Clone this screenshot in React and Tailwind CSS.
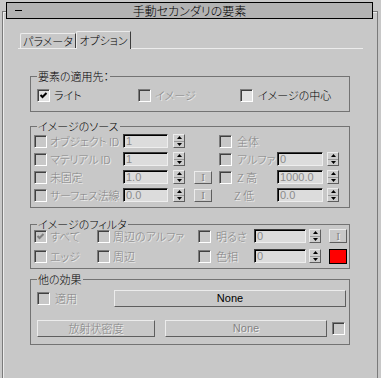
import React from 'react';

const jp = "font-['Noto_Sans_CJK_JP',sans-serif] font-light [font-feature-settings:'palt']";
const dim = 'text-[#838383] [text-shadow:1px_1px_0_#f2f2f2]';
const raised = 'border border-t-[#ececec] border-l-[#ececec] border-r-[#5e5e5e] border-b-[#5e5e5e]';

const Check = ({ checked, disabled }) => (
    <span
        className={`flex w-[13px] h-[13px] shrink-0 items-center justify-center border border-t-[#7c7c7c] border-l-[#7c7c7c] border-r-white border-b-white shadow-[inset_1px_1px_0_#404040] ${
            disabled ? 'bg-[#c8c8c8]' : 'bg-[#e2e2e2]'
        }`}
    >
        {checked && (
            <svg width="9" height="9" viewBox="0 0 9 9">
                <path d="M1.5 4 L3.5 6 L7.5 2" fill="none" stroke={disabled ? '#808080' : '#000'} strokeWidth="2" />
            </svg>
        )}
    </span>
);

const Label = ({ disabled, children, className = '' }) => (
    <span className={`whitespace-nowrap leading-none ${disabled ? dim : 'text-black'} ${className}`}>{children}</span>
);

const Field = ({ value, w }) => (
    <span
        className={`flex items-center h-[14px] ${w} shrink-0 border border-t-[#3a3a3a] border-l-[#3a3a3a] border-r-[#eeeeee] border-b-[#eeeeee] shadow-[inset_1px_1px_0_#000] bg-[#dcdcdc] pl-[2px] text-[#8c8c8c] text-[11px] leading-none font-normal font-['Liberation_Sans',sans-serif]`}
    >
        {value}
    </span>
);

const Spin = ({ className = '' }) => (
    <span className={`flex flex-col w-[12px] h-[14px] shrink-0 bg-[#cdcdcd] ${raised} ${className}`}>
        <span className="flex flex-1 items-center justify-center border-b border-[#9a9a9a]">
            <svg width="5" height="3" viewBox="0 0 5 3">
                <path d="M2.5 0 L5 3 L0 3Z" fill="#000" />
            </svg>
        </span>
        <span className="flex flex-1 items-center justify-center">
            <svg width="5" height="3" viewBox="0 0 5 3">
                <path d="M0 0 L5 0 L2.5 3Z" fill="#000" />
            </svg>
        </span>
    </span>
);

const IBtn = ({ className = '' }) => (
    <span
        className={`flex w-[18px] h-[13px] shrink-0 items-center justify-center bg-[#c8c8c8] ${raised} text-[11px] leading-none font-normal font-['Liberation_Serif',serif] ${dim} ${className}`}
    >
        I
    </span>
);

const Group = ({ title, className = '', children }) => (
    <fieldset className={`ml-[27px] w-[320px] border border-[#737373] ${className}`}>
        <legend className="ml-[6px] px-[1px] text-[11px] leading-[12px] text-black">{title}</legend>
        {children}
    </fieldset>
);

const SourceRow = ({ label, value, right, rightValue, iBtn, rightCheck = true }) => (
    <div className="flex items-center h-[18px] pl-[3px]">
        <Check disabled />
        <Label disabled className="ml-[3px] w-[73px] tracking-[-0.2px]">{label}</Label>
        <Field value={value} w="w-[45px]" />
        <Spin className="ml-[5px]" />
        {iBtn ? <IBtn className="ml-[9px]" /> : <span className="ml-[9px] w-[18px]" />}
        {rightCheck ? (
            <>
                <span className="ml-[7px]">
                    <Check disabled />
                </span>
                <Label disabled className="ml-[5px] w-[40px]">{right}</Label>
            </>
        ) : (
            <Label disabled className="ml-[7px] w-[58px] pl-[15px]">{right}</Label>
        )}
        {rightValue && (
            <>
                <Field value={rightValue} w="w-[46px]" />
                <Spin className="ml-[4px]" />
            </>
        )}
    </div>
);

export default function App() {
    return (
        <div className={`w-[381px] h-[378px] overflow-hidden bg-[#c8c8c8] pt-[11px] text-[11px] ${jp}`}>
            <div className="ml-[2px] w-[376px] h-[367px] border-l border-t border-r border-[#7a7a7a] shadow-[inset_1px_1px_0_#ececec]">
                {/* title bar */}
                <div className="-mt-[10px] ml-[3px] w-[367px] h-[17px] border border-black bg-[#b3b3b3] flex items-center relative">
                    <span className="ml-[8px] w-[7px] h-[1px] bg-black" />
                    <span className="flex-1 text-center pr-[15px] text-[12px] leading-none text-black">手動セカンダリの要素</span>
                </div>

                {/* tabs */}
                <div className="mt-[12px] ml-[15px] w-[345px] h-[18px] flex items-end border-b border-[#ececec] pl-[2px]">
                    <div className="w-[56px] h-[15px] flex items-center justify-center border-l border-t border-r border-l-[#ececec] border-t-[#ececec] border-r-[#3c3c3c] rounded-tl-[2px] text-black leading-none">
                        パラメータ
                    </div>
                    <div className="w-[55px] h-[18px] -mb-px flex items-center justify-center border-l border-t border-r border-l-[#ececec] border-t-[#ececec] border-r-[#3c3c3c] rounded-tl-[2px] bg-[#c8c8c8] text-black leading-none">
                        オプション
                    </div>
                </div>

                {/* 要素の適用先 */}
                <Group title="要素の適用先：" className="mt-[21px] pt-[4px] pb-[7px]">
                    <div className="flex items-center h-[18px] pl-[6px]">
                        <div className="w-[101px] flex items-center gap-[4px]">
                            <Check checked />
                            <Label>ライト</Label>
                        </div>
                        <div className="w-[102px] flex items-center gap-[4px]">
                            <Check disabled />
                            <Label disabled>イメージ</Label>
                        </div>
                        <div className="flex items-center gap-[5px]">
                            <Check />
                            <Label>イメージの中心</Label>
                        </div>
                    </div>
                </Group>

                {/* イメージのソース */}
                <Group title="イメージのソース" className="mt-[8px] pb-[3px]">
                    <SourceRow label="オブジェクト ID" value="1" right="全体" />
                    <SourceRow label="マテリアル ID" value="1" right="アルファ" rightValue="0" />
                    <SourceRow label="未固定" value="1.0" right="Z 高" rightValue="1000.0" iBtn />
                    <SourceRow label="サーフェス法線" value="0.0" right="Z 低" rightValue="0.0" iBtn rightCheck={false} />
                </Group>

                {/* イメージのフィルタ */}
                <Group title="イメージのフィルタ" className="mt-[10px] pb-[4px]">
                    <div className="-mt-[2px] flex flex-col gap-[4px]">
                        <div className="flex items-center h-[16px] pl-[3px]">
                            <div className="w-[63px] flex items-center gap-[3px]">
                                <Check checked disabled />
                                <Label disabled>すべて</Label>
                            </div>
                            <div className="w-[101px] flex items-center gap-[3px]">
                                <Check disabled />
                                <Label disabled>周辺のアルファ</Label>
                            </div>
                            <div className="w-[56px] flex items-center gap-[5px]">
                                <Check disabled />
                                <Label disabled>明るさ</Label>
                            </div>
                            <Field value="0" w="w-[52px]" />
                            <Spin className="ml-[3px]" />
                            <IBtn className="ml-[8px] h-[14px]" />
                        </div>
                        <div className="flex items-center h-[16px] pl-[3px]">
                            <div className="w-[63px] flex items-center gap-[3px]">
                                <Check disabled />
                                <Label disabled>エッジ</Label>
                            </div>
                            <div className="w-[101px] flex items-center gap-[3px]">
                                <Check disabled />
                                <Label disabled>周辺</Label>
                            </div>
                            <div className="w-[56px] flex items-center gap-[5px]">
                                <Check disabled />
                                <Label disabled>色相</Label>
                            </div>
                            <Field value="0" w="w-[52px]" />
                            <Spin className="ml-[3px]" />
                            <span className="ml-[8px] w-[18px] h-[15px] border border-black bg-[#ff0000]" />
                        </div>
                    </div>
                </Group>

                {/* 他の効果 */}
                <Group title="他の効果" className="mt-[4px] pt-[5px] pb-[7px]">
                    <div className="flex items-center h-[17px] pl-[6px]">
                        <div className="w-[77px] flex items-center gap-[5px]">
                            <Check disabled />
                            <Label disabled>適用</Label>
                        </div>
                        <span className={`w-[232px] h-[17px] flex items-center justify-center bg-[#c8c8c8] ${raised} text-[11px] leading-none font-normal text-black font-['Liberation_Sans',sans-serif]`}>
                            None
                        </span>
                    </div>
                    <div className="mt-[13px] flex items-center h-[17px] pl-[6px]">
                        <span className={`w-[118px] h-[17px] flex items-center justify-center bg-[#c8c8c8] ${raised} leading-none ${dim}`}>
                            放射状密度
                        </span>
                        <span className={`ml-[10px] w-[162px] h-[17px] flex items-center justify-center bg-[#c8c8c8] ${raised} text-[11px] leading-none font-normal font-['Liberation_Sans',sans-serif] ${dim}`}>
                            None
                        </span>
                        <span className="ml-[5px]">
                            <Check disabled />
                        </span>
                    </div>
                </Group>
            </div>
        </div>
    );
}
